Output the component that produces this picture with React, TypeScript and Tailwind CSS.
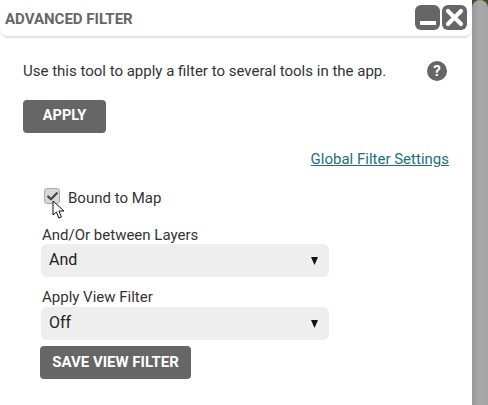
import { Check } from 'lucide-react'

function FilterSelect({ value }: { value: string }) {
  return (
    <div className="flex h-[33px] w-[288px] items-center justify-between rounded-[6px] bg-[#eeeeee] pl-[8px] pr-[11px] text-[16px] text-[#222222]">
      <span className="-mt-[2px]">{value}</span>
      <svg width="7" height="9" viewBox="0 0 7 9">
        <path d="M0 1h7L3.5 9z" fill="#111111" />
      </svg>
    </div>
  )
}

function CursorIcon() {
  return (
    <svg className="absolute left-[8px] top-[12px]" width="14" height="20" viewBox="0 0 14 20">
      <path
        d="M1 1v14l3.4-3 2.4 6 2.6-1-2.5-6H12z"
        fill="#ffffff"
        stroke="#111111"
        strokeWidth="1"
        strokeLinejoin="round"
      />
    </svg>
  )
}

export default function App() {
  return (
    <div className="flex h-[405px] w-[488px] overflow-hidden bg-white font-['Roboto',sans-serif]">
      <div className="flex w-[472px] flex-col">
        {/* header */}
        <div className="flex h-[37px] items-center justify-between rounded-b-[8px] border-b border-[#dddddd] pl-[5px] pr-[5px] shadow-[0_1px_2px_rgba(0,0,0,0.12)]">
          <span className="mt-[2px] text-[15px] font-bold text-[#666666]">ADVANCED FILTER</span>
          <div className="mb-[1px] flex gap-[2px]">
            <button className="flex h-[25px] w-[25px] items-end justify-center rounded-[6px] bg-[#666666] pb-[5px]">
              <span className="h-[4px] w-[16px] bg-white" />
            </button>
            <button className="flex h-[25px] w-[25px] items-center justify-center rounded-[6px] bg-[#666666]">
              <svg width="19" height="19" viewBox="0 0 19 19">
                <path d="M3 3l13 13M16 3L3 16" stroke="#ffffff" strokeWidth="4.2" strokeLinecap="round" />
              </svg>
            </button>
          </div>
        </div>

        {/* body */}
        <div className="flex flex-col pl-[23px] pr-[23px]">
          <div className="mt-[24px] flex items-center justify-between pr-[2px]">
            <p className="text-[15px] leading-[20px] text-[#333333]">
              Use this tool to apply a filter to several tools in the app.
            </p>
            <span className="flex h-[20px] w-[20px] items-center justify-center rounded-full bg-[#666666] text-[15px] font-bold text-white">
              ?
            </span>
          </div>

          <button className="mt-[19px] h-[33px] w-[83px] rounded-[4px] bg-[#666666] pb-[2px] text-[14.5px] font-bold text-white">
            APPLY
          </button>

          <a className="mt-[16px] self-end text-[15px] leading-[20px] text-[#1f6f82] underline">
            Global Filter Settings
          </a>

          <div className="mt-[20px] flex h-[20px] items-center pl-[21px]">
            <div className="relative -mt-[6px] h-[16px] w-[16px]">
              <div className="flex h-[16px] w-[16px] items-center justify-center rounded-[3px] border border-[#aaaaaa] bg-[#d8d8d8]">
                <Check size={13} strokeWidth={4} className="text-[#444444]" />
              </div>
              <CursorIcon />
            </div>
            <span className="-mt-[2px] ml-[8px] text-[15px] leading-[20px] text-[#333333]">Bound to Map</span>
          </div>

          <div className="ml-[18px] mt-[18px] flex flex-col">
            <label className="pb-[2px] pl-[1px] text-[15px] leading-[16px] text-[#333333]">And/Or between Layers</label>
            <div className="-mt-[1px]">
              <FilterSelect value="And" />
            </div>
            <label className="mt-[12px] pb-[2px] pl-[1px] text-[15px] leading-[16px] text-[#333333]">Apply View Filter</label>
            <FilterSelect value="Off" />
            <button className="-ml-[1px] mt-[6px] h-[33px] w-[151px] rounded-[4px] bg-[#666666] text-[15px] font-bold text-white">
              SAVE VIEW FILTER
            </button>
          </div>
        </div>
      </div>

      {/* scrollbar */}
      <div className="w-[16px] bg-[#3f4f25]">
        <div className="h-full rounded-t-[8px] bg-gradient-to-r from-[#999999] via-[#aaaaaa] to-[#a4a4a4]" />
      </div>
    </div>
  )
}
